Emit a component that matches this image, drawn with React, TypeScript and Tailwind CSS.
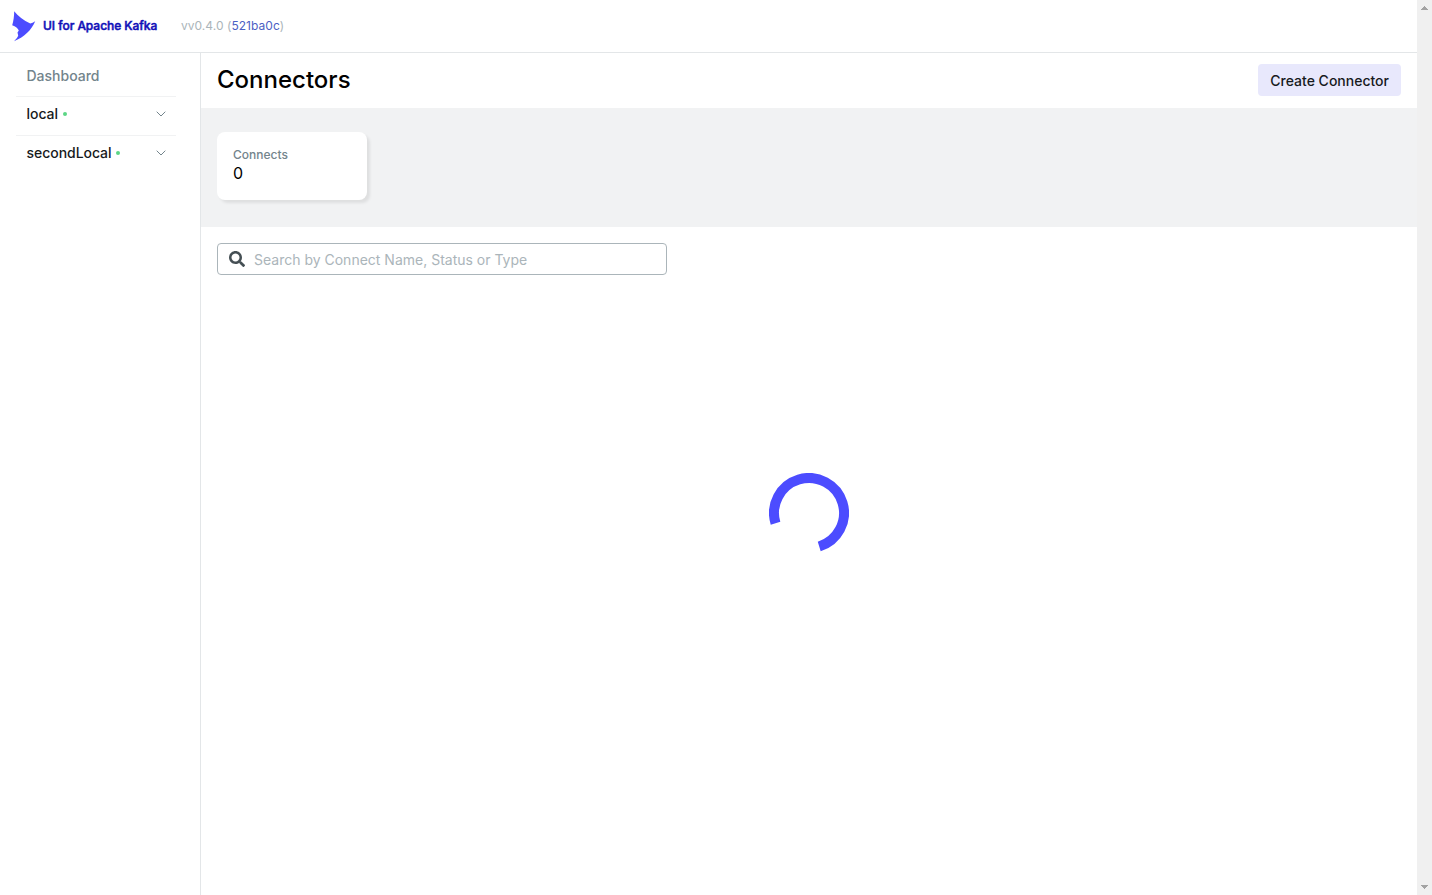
import { FaSearch } from 'react-icons/fa';

function Logo() {
  return (
    <svg className="h-[31px] w-6 shrink-0" viewBox="0 0 24 31" fill="#4C4CFF">
      <path d="M2.200 .2C6 5 11.500 9.500 18.300 12.500Q20.500 12.200 23.200 10.300C19.500 19 12 26.500 2 30.200Q5.300 27.500 6.200 24.800L5.500 21.500L6.800 19.500Q5.500 16.200 .2 14.200C1.500 10 2.200 5 2.200 .2Z" />
    </svg>
  );
}

function Cluster({ name }: { name: string }) {
  return (
    <li className="flex h-[39px] items-center border-t border-[#F1F2F3] pr-2.5 pb-1 pl-[10.500px] text-sm font-medium text-[#171A1C]">
      <span className="tracking-[-0.04px]">{name}</span>
      <span className="ml-[4.600px] size-1 rounded-full bg-[#5CD685]" />
      <svg className="ml-auto h-1.5 w-2.5" viewBox="0 0 10 6" fill="none" stroke="#73848C">
        <path d="M.7 .7 5 5 9.300 .7" />
      </svg>
    </li>
  );
}

function Scrollbar() {
  return (
    <div className="flex w-[15px] shrink-0 flex-col items-center justify-between bg-[#F0F0F0] py-1.5">
      <svg className="h-1 w-[7px]" viewBox="0 0 7 4" fill="#A3A3A3" shapeRendering="crispEdges">
        <path d="M3 0h1v1h1v1h1v1h1v1H0V3h1V2h1V1h1z" />
      </svg>
      <svg className="h-1 w-[7px]" viewBox="0 0 7 4" fill="#A3A3A3" shapeRendering="crispEdges">
        <path d="M0 0h7v1H6v1H5v1H4v1H3V3H2V2H1V1H0z" />
      </svg>
    </div>
  );
}

export default function App() {
  return (
    <div className="flex h-screen overflow-hidden bg-white font-['Inter',sans-serif] text-black">
      <div className="flex min-w-0 flex-1 flex-col">
        <header className="flex h-[53px] shrink-0 items-center border-b border-[#E3E6E8] pl-3 text-xs">
          <Logo />
          <span className="ml-[7px] w-[138px] font-medium tracking-[-0.04px] whitespace-nowrap text-[#1010B8] [-webkit-text-stroke:0.5px_#1010B8]">UI for Apache Kafka</span>
          <span className="tracking-[0.04px] whitespace-nowrap text-[#ABB5BA]">
            vv0.4.0 (<a className="text-[#4C5FC4]">521ba0c</a>)
          </span>
        </header>
        <div className="flex min-h-0 flex-1">
          <nav className="w-[201px] shrink-0 border-r border-[#E3E6E8] pt-1 pr-6 pl-4">
            <ul>
              <li className="flex h-[39px] items-center pb-0.5 pl-[10.500px] text-sm font-medium text-[#73848C]">
                Dashboard
              </li>
              <Cluster name="local" />
              <Cluster name="secondLocal" />
            </ul>
          </nav>
          <main className="flex min-w-0 flex-1 flex-col">
            <div className="flex h-[55px] shrink-0 items-center justify-between px-4 pb-[2px]">
              <h1 className="text-2xl leading-8 font-medium">Connectors</h1>
              <button className="h-8 rounded bg-[#E8E8FC] px-3 pt-0.5 text-sm font-medium text-[#171A1C]">Create Connector</button>
            </div>
            <section className="h-[119px] shrink-0 bg-[#F1F2F3] px-4 pt-6">
              <div className="h-[68px] w-[150px] rounded-lg bg-white px-4 pt-3.5 shadow-[3px_3px_3px_rgba(0,0,0,0.08)]">
                <div className="text-xs leading-[18px] font-medium text-[#73848C]">Connects</div>
                <div className="text-base leading-[18px]">0</div>
              </div>
            </section>
            <div className="px-4 pt-4">
              <label className="flex h-8 w-[450px] items-center rounded border border-[#ABB5BA] pl-[11px]">
                <FaSearch className="size-4 text-[#454F54]" />
                <input
                  className="ml-[9px] min-w-0 flex-1 bg-transparent pt-0.5 text-sm outline-none placeholder:text-[#ABB5BA]"
                  placeholder="Search by Connect Name, Status or Type"
                />
              </label>
            </div>
            <div className="flex justify-center pt-[198px]">
              <svg className="size-20" viewBox="0 0 80 80" fill="none" stroke="#4C4CFF" strokeWidth="10">
                <path d="M6.530 50.230A35 35 0 1 1 50.230 73.470" />
              </svg>
            </div>
          </main>
        </div>
      </div>
      <Scrollbar />
    </div>
  );
}
